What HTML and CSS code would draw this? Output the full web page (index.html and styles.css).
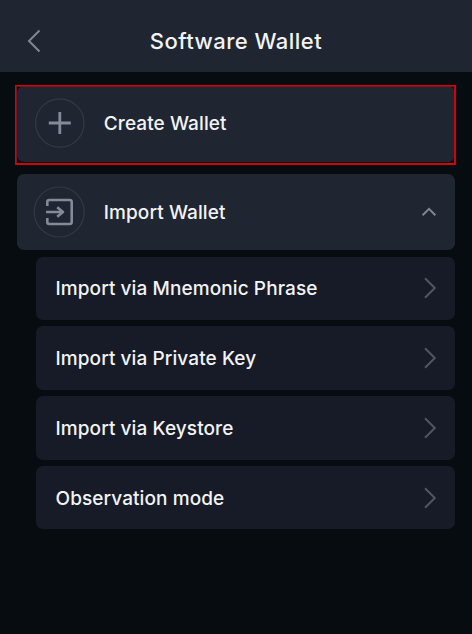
FILE: index.html
```html
<!DOCTYPE html>
<html lang="en">
<head>
<meta charset="utf-8">
<title>Software Wallet</title>
<link rel="stylesheet" href="styles.css">
</head>
<body>
<header class="header">
  <svg class="back" width="14" height="24" viewBox="0 0 14 24"><path d="M12.5 1.5 2 12l10.5 10.5"/></svg>
  <h1 class="title">Software Wallet</h1>
</header>
<main class="content">
  <div class="card create">
    <svg class="icon" width="52" height="52" viewBox="0 0 52 52"><circle class="ring" cx="26.8" cy="26" r="24.2"/><path class="plus" d="M26.8 15v22M15.8 26h22"/></svg>
    <span class="label">Create Wallet</span>
    <span class="highlight"></span>
  </div>
  <div class="card import">
    <svg class="icon" width="52" height="52" viewBox="0 0 52 52"><circle class="ring" cx="26.2" cy="26" r="25"/><path class="door" d="M14.3 20V16Q14.3 14 16.3 14H36.7Q38.7 14 38.7 16V36Q38.7 38 36.7 38H16.3Q14.3 38 14.3 36V32M13 26H30M24.2 21.2 30 26l-5.8 4.8"/></svg>
    <span class="label">Import Wallet</span>
    <svg class="up" width="16" height="10" viewBox="0 0 16 10"><path d="M1.6 8.2 8 1.8l6.4 6.4"/></svg>
  </div>
  <div class="options">
    <div class="option"><span class="label">Import via Mnemonic Phrase</span><svg class="next" width="14" height="24" viewBox="0 0 14 24"><path d="M2 2.2 11.8 12 2 21.8"/></svg></div>
    <div class="option"><span class="label">Import via Private Key</span><svg class="next" width="14" height="24" viewBox="0 0 14 24"><path d="M2 2.2 11.8 12 2 21.8"/></svg></div>
    <div class="option"><span class="label">Import via Keystore</span><svg class="next" width="14" height="24" viewBox="0 0 14 24"><path d="M2 2.2 11.8 12 2 21.8"/></svg></div>
    <div class="option"><span class="label">Observation mode</span><svg class="next" width="14" height="24" viewBox="0 0 14 24"><path d="M2 2.2 11.8 12 2 21.8"/></svg></div>
  </div>
</main>
</body>
</html>
```
FILE: styles.css
```css
* { box-sizing: border-box; }
body {
  margin: 0;
  min-height: 634px;
  background: #060c0f;
  color: #f2f3f5;
  font-family: Inter, "Liberation Sans", sans-serif;
  font-weight: 500;
}
svg { display: block; flex: none; fill: none; }
.header {
  display: grid;
  grid-template-columns: 27px 14px 1fr 41px;
  align-items: center;
  height: 72px;
  padding-top: 10px;
  background: #202532;
}
.back { grid-column: 2; stroke: #818692; stroke-width: 2; }
.title {
  margin: 0;
  text-align: center;
  font-size: 22px;
  font-weight: 500;
  line-height: 28px;
  letter-spacing: 0.46px;
}
.content { padding: 14px 17px 0 17px; }
.card {
  position: relative;
  display: flex;
  align-items: center;
  height: 76px;
  padding: 0 18.5px 0 16px;
  border-radius: 7px;
  background: #202532;
}
.create { height: 75.5px; padding-bottom: 2px; }
.import { margin-top: 12.5px; }
.icon { margin-right: 18.8px; }
.ring { stroke: #343946; stroke-width: 1.2; }
.plus { stroke: #858a98; stroke-width: 2.8; }
.door { stroke: #858a98; stroke-width: 2.6; stroke-linejoin: round; }
.label { padding-top: 2px; font-size: 19px; line-height: 24px; letter-spacing: 0.09px; white-space: nowrap; }
.up { margin-left: auto; stroke: #818692; stroke-width: 2; }
.highlight {
  position: absolute;
  inset: -1px -1px -3.5px -2px;
  border: solid #d5000b;
  border-width: 1px 2px 2px 1px;
  box-shadow: inset 1px 1px #8a0d18;
}
.options {
  display: grid;
  gap: 6.4px;
  margin: 6.6px 0 0 19px;
}
.option {
  display: flex;
  align-items: center;
  justify-content: space-between;
  height: 63.4px;
  padding: 0 18px 0 19.5px;
  border-radius: 7px;
  background: #171b27;
}
.next { stroke: #505562; stroke-width: 2; }
```
